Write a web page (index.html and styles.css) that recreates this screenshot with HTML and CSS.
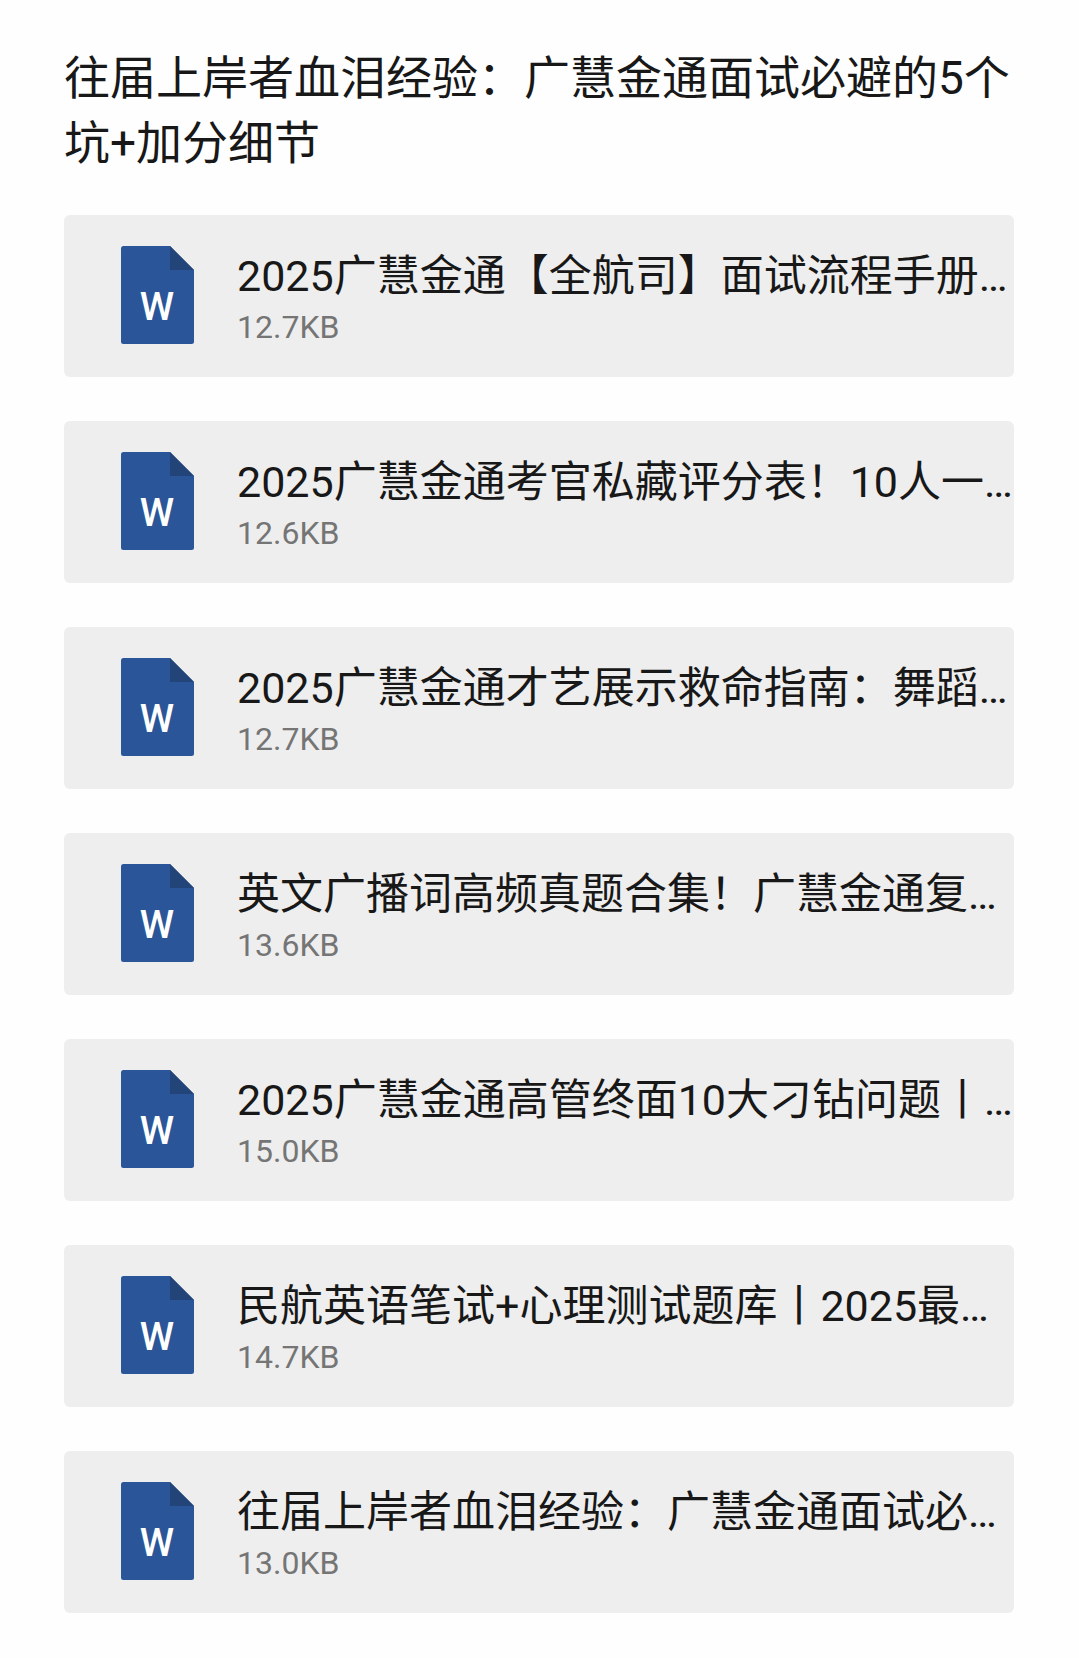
FILE: index.html
```html
<!DOCTYPE html>
<html lang="zh-CN">
<head>
  <meta charset="UTF-8">
  <meta name="viewport" content="width=device-width, initial-scale=1.0">
  <title>往届上岸者血泪经验</title>
  <link rel="stylesheet" href="styles.css">
</head>
<body>
  <svg class="sprite" aria-hidden="true">
    <symbol id="word" viewBox="0 0 73 98">
      <path d="M2.5 0H49L73 24V95.500Q73 98 70.500 98H2.500Q0 98 0 95.500V2.500Q0 0 2.500 0Z" fill="#2a5699"/>
      <path d="M49 0L73 24H49Z" fill="#234479"/>
      <text class="word-letter" x="36" y="74" text-anchor="middle" fill="#fff">W</text>
    </symbol>
  </svg>

  <main class="container">
    <h1 class="title">往届上岸者血泪经验：广慧金通面试必避的5个坑+加分细节</h1>

    <ul class="files">
      <li>
        <a class="file" href="#">
          <svg class="file-icon" aria-hidden="true"><use href="#word"/></svg>
          <span class="file-info">
            <span class="file-name">2025广慧金通【全航司】面试流程手册…</span>
            <span class="file-size">12.7KB</span>
          </span>
        </a>
      </li>
      <li>
        <a class="file" href="#">
          <svg class="file-icon" aria-hidden="true"><use href="#word"/></svg>
          <span class="file-info">
            <span class="file-name">2025广慧金通考官私藏评分表！10人一…</span>
            <span class="file-size">12.6KB</span>
          </span>
        </a>
      </li>
      <li>
        <a class="file" href="#">
          <svg class="file-icon" aria-hidden="true"><use href="#word"/></svg>
          <span class="file-info">
            <span class="file-name">2025广慧金通才艺展示救命指南：舞蹈…</span>
            <span class="file-size">12.7KB</span>
          </span>
        </a>
      </li>
      <li>
        <a class="file" href="#">
          <svg class="file-icon" aria-hidden="true"><use href="#word"/></svg>
          <span class="file-info">
            <span class="file-name">英文广播词高频真题合集！广慧金通复…</span>
            <span class="file-size">13.6KB</span>
          </span>
        </a>
      </li>
      <li>
        <a class="file" href="#">
          <svg class="file-icon" aria-hidden="true"><use href="#word"/></svg>
          <span class="file-info">
            <span class="file-name">2025广慧金通高管终面10大刁钻问题丨…</span>
            <span class="file-size">15.0KB</span>
          </span>
        </a>
      </li>
      <li>
        <a class="file" href="#">
          <svg class="file-icon" aria-hidden="true"><use href="#word"/></svg>
          <span class="file-info">
            <span class="file-name">民航英语笔试+心理测试题库丨2025最…</span>
            <span class="file-size">14.7KB</span>
          </span>
        </a>
      </li>
      <li>
        <a class="file" href="#">
          <svg class="file-icon" aria-hidden="true"><use href="#word"/></svg>
          <span class="file-info">
            <span class="file-name">往届上岸者血泪经验：广慧金通面试必…</span>
            <span class="file-size">13.0KB</span>
          </span>
        </a>
      </li>
    </ul>
  </main>
</body>
</html>
```
FILE: styles.css
```css
* {
  box-sizing: border-box;
}
body {
  margin: 0;
  font-family: Roboto, 'Noto Sans CJK SC', sans-serif;
  background-color: #fefefe;
  color: #181818;
}
.sprite {
  display: none;
}
.container {
  padding: 46px 65px 44px 64px;
}
.title {
  margin: 0 0 39px;
  font-size: 46px;
  font-weight: 400;
  line-height: 65px;
}
.files {
  display: flex;
  flex-direction: column;
  gap: 44px;
  margin: 0;
  padding: 0;
  list-style: none;
}
.file {
  display: flex;
  align-items: flex-start;
  gap: 43px;
  padding: 31px 0 29px 57px;
  border-radius: 6px;
  background-color: #eee;
  color: inherit;
  text-decoration: none;
}
.file-icon {
  flex: none;
  width: 73px;
  height: 98px;
}
.word-letter {
  font-size: 39px;
  font-weight: 500;
}
.file-info {
  display: flex;
  flex: 1;
  flex-direction: column;
  min-width: 0;
}
.file-name {
  overflow: hidden;
  font-size: 43px;
  line-height: 60px;
  white-space: nowrap;
}
.file-size {
  color: #757575;
  font-size: 32px;
  line-height: 42px;
}
```
